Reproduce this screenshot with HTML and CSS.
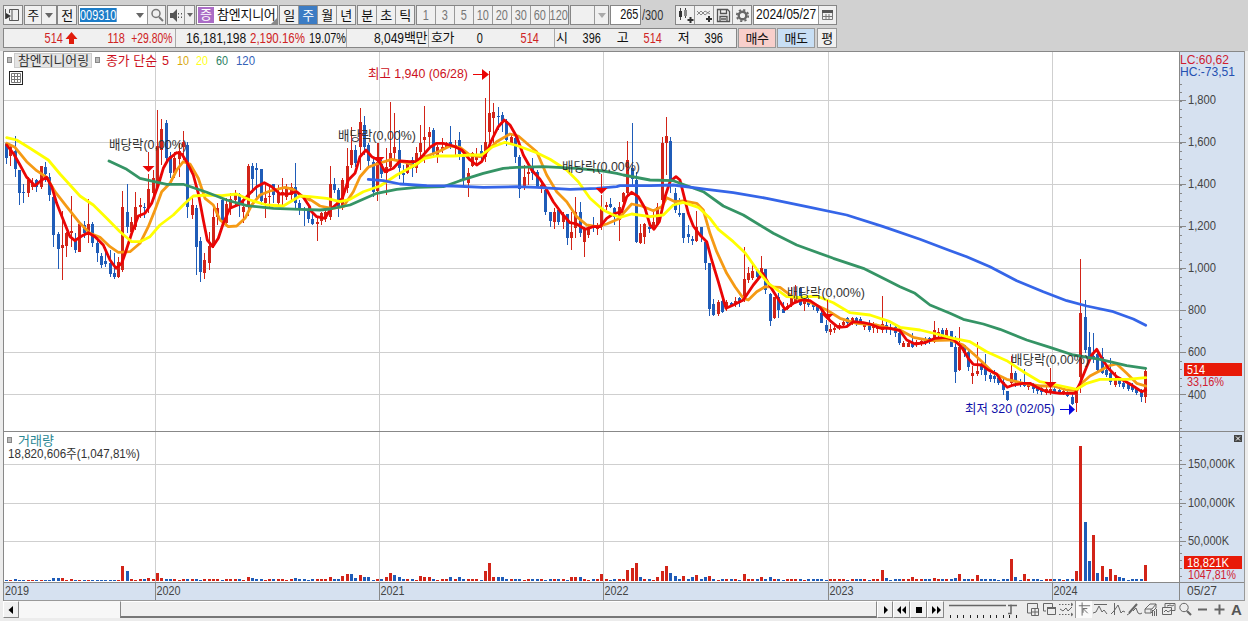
FILE: index.html
```html
<!DOCTYPE html>
<html lang="ko">
<head>
<meta charset="utf-8">
<title>참엔지니어링 차트</title>
<link rel="stylesheet" href="styles.css">
</head>
<body>
<div class="window">
  <div class="toolbar">
    <div class="group g-panel"><svg width="17" height="17" viewBox="0 0 17 17"><path d="M5.5 3.5h9v11h-9v-3M5.5 7V3.500M8 14V4M1.500 3v10" fill="none" stroke="#555"/><path d="M2 7l5 3-5 3z" fill="#333"/></svg></div>
    <div class="group g-cycle"><span class="cell w16">주</span><span class="cell grow"><i class="caret"></i></span></div>
    <div class="group g-prev"><span class="cell grow">전</span></div>
    <div class="group g-code"><span class="field"><span class="num sel">009310</span></span><span class="cell w15"><i class="caret"></i></span><span class="cell grow"><svg width="16" height="16" viewBox="0 0 16 16"><circle cx="7" cy="6.500" r="4" fill="none" stroke="#777" stroke-width="1.500"/><path d="M10 10l4 4" stroke="#777" stroke-width="2"/></svg></span></div>
    <div class="group g-sound"><span class="cell w16"><svg width="15" height="15" viewBox="0 0 15 15"><path d="M1 5h3l4-4v13l-4-4H1z" fill="#555"/><path d="M9.500 5v7M12.500 5v7" stroke="#555" stroke-dasharray="1.500 2"/></svg></span><span class="cell grow"><i class="caret small"></i></span></div>
    <div class="group g-name"><span class="badge">증</span><span class="name">참엔지니어</span><svg class="grip" width="6" height="6" viewBox="0 0 6 6"><path d="M6 0v6H0z" fill="#888"/></svg></div>
    <div class="group g-period"><span class="cell grow">일</span><span class="cell grow on">주</span><span class="cell grow">월</span><span class="cell grow">년</span></div>
    <div class="group g-min"><span class="cell grow">분</span><span class="cell grow">초</span><span class="cell grow">틱</span></div>
    <div class="group g-ticks"><span class="cell grow"><b class="num">1</b></span><span class="cell grow"><b class="num">3</b></span><span class="cell grow"><b class="num">5</b></span><span class="cell grow"><b class="num">10</b></span><span class="cell grow"><b class="num">20</b></span><span class="cell grow"><b class="num">30</b></span><span class="cell grow"><b class="num">60</b></span><span class="cell grow"><b class="num">120</b></span></div>
    <div class="group g-combo"><span class="cell grow"></span><span class="cell w13"><i class="caret pale"></i></span></div>
    <div class="group g-count"><b class="num right">265</b></div>
    <div class="total"><b class="num left">/300</b></div>
    <div class="group g-tools">
      <span class="cell grow"><svg width="17" height="17" viewBox="0 0 17 17"><path d="M3.500 1v12M8.500 1v10" stroke="#444"/><path d="M2 4h3v6H2z" fill="#333"/><path d="M7 3h3v6H7z" fill="#888"/><path d="M13.500 10v6M10.500 13h6" stroke="#333" stroke-width="2"/></svg></span>
      <span class="cell grow"><svg width="17" height="17" viewBox="0 0 17 17"><path d="M1 8l4-4 4 4 5-4M1 4l4 4 4-4 5 3" fill="none" stroke="#888"/><path d="M13 9v6M10 12h6" stroke="#333" stroke-width="2"/></svg></span>
      <span class="cell grow"><svg width="17" height="17" viewBox="0 0 17 17"><path d="M2.500 2.500h10l2 2v10h-12zM5.500 2.500v4h6v-4M5 14.500v-5h7v5M6 12h5" fill="none" stroke="#555" stroke-width="1.300"/></svg></span>
      <span class="cell grow"><svg width="17" height="17" viewBox="0 0 17 17"><circle cx="8.500" cy="8.500" r="3.800" fill="none" stroke="#666" stroke-width="2.400"/><circle cx="8.500" cy="8.500" r="5.700" fill="none" stroke="#666" stroke-width="1.800" stroke-dasharray="2.200 2.280"/></svg></span>
    </div>
    <div class="group g-date"><span class="datefield"><b class="num left broad">2024/05/27</b></span><span class="cell grow"><svg width="13" height="13" viewBox="0 0 13 13"><path d="M1.500 2.500h10v8h-10zM5 5v5M8 5v5M2 7.500h9" fill="none" stroke="#777"/><path d="M1 1h11v3H1z" fill="#555"/></svg></span></div>
  </div>

  <div class="quote">
    <div class="quotebox">
      <div class="q q1"><b class="num red">514</b><svg width="13" height="14" viewBox="0 0 13 14"><path d="M6.500 1l6 7H9v5H4V8H.5z" fill="#e01c0c"/></svg><b class="num red">118</b><b class="num red pct">+29.80%</b></div>
      <div class="q q2"><b class="num left broad v1">16,181,198</b><b class="num left broad red v2">2,190.16%</b><b class="num left">19.07%</b></div>
      <div class="q q3"><b class="num right broad">8,049</b><span>백만</span></div>
      <div class="q q4"><span>호가</span><b class="num zero">0</b><b class="num red">514</b></div>
      <div class="q q5"><span>시</span><b class="num">396</b><span>고</span><b class="num red">514</b><span>저</span><b class="num">396</b></div>
    </div>
    <button class="btn buy">매수</button><button class="btn sell">매도</button><button class="btn avg">평</button>
  </div>

  <svg class="chart" id="chart" width="1242" height="550" viewBox="3 51 1242 550"></svg>

  <div class="footer">
    <div class="arrowbtn first"><svg width="14" height="14" viewBox="0 0 14 14"><path d="M9 3v8L4.500 7z"/></svg></div>
    <div class="trough"></div>
    <div class="thumb"></div>
    <div class="arrowbtn"><svg width="14" height="14" viewBox="0 0 14 14"><path d="M6 3v8l4-4z"/></svg></div>
    <div class="arrowbtn wide"><svg width="14" height="14" viewBox="0 0 14 14"><path d="M6 3v8L2 7zM11 3v8L7 7z"/></svg></div>
    <div class="arrowbtn wide"><svg width="14" height="14" viewBox="0 0 14 14"><path d="M4 4h6v6H4z"/></svg></div>
    <div class="arrowbtn wide"><svg width="14" height="14" viewBox="0 0 14 14"><path d="M3 3v8l4-4zM8 3v8l4-4z"/></svg></div>
    <svg class="slider" width="76" height="17" viewBox="0 0 76 17"><path d="M5 4.500h57M64 12.500h3V3.500M64 4.500h9" fill="none" stroke="#666" stroke-width="1.500"/><path d="M6.500 14v3M13.500 14v3M19.500 14v3M26.500 14v3M33.500 14v3M39.500 14v3M46.500 14v3M52.500 14v3M59.500 14v3M65.500 14v3M72.500 14v3" stroke="#222"/></svg>
    <div class="icons">
      <svg viewBox="0 0 17 17"><path d="M7 12H3.500V2.500h10V7M7.500 7.500h7v7h-7zM11 7.500v7M7.500 11h7" /></svg>
      <svg viewBox="0 0 17 17"><path d="M5 10H2.500V2.500h9V6M6.500 6.500h8v7h-8z"/><path d="M6 6h9v2H6z" class="solid"/></svg>
      <svg viewBox="0 0 17 17"><path d="M1 3.500h13M1 13.500h13" stroke-dasharray="1.500 1.500"/><path d="M2 8l3 2 3-3 2 3 4-4M13 2l2 1.500-2 1.500M13 12l2 1.500-2 1.500"/></svg>
      <svg viewBox="0 0 17 17" class="pressed"><path d="M3 4.500h12M6.500 1v14M7.500 7.500l5 5M7.500 12V7.500H12" /></svg>
      <svg viewBox="0 0 17 17"><path d="M2 3.500h13M1 12l3-1 3-6 3 6 2-2 3 4"/></svg>
      <svg viewBox="0 0 17 17"><path d="M5.500 2v12M2 13l3-3 4-6 3 8 2-2 2 1"/></svg>
      <svg viewBox="0 0 17 17"><path d="M1 14l3-2M7 10l3-3 2 5 2 1 2-1"/><path d="M3 12l8-9" stroke-width="2"/></svg>
      <svg viewBox="0 0 17 17"><path d="M2 8l5-5h6l-4 5zM2 8v4h6V8M8 12l5-5V3M9.500 9v6M11.500 10v5M13.500 8v7"/></svg>
      <svg viewBox="0 0 17 17"><path d="M5 6V2.500h10v7h-3M2.500 6.500h9v7h-9zM4 11l2-2 2 2 3-2M7 5l3-1 2 1 2-1"/></svg>
      <svg viewBox="0 0 17 17"><circle cx="7" cy="6.500" r="4.200"/><path d="M10 10l4 4" stroke-width="2.200"/></svg>
      <svg viewBox="0 0 17 17"><path d="M4 8.500h9" stroke-width="2"/></svg>
      <svg viewBox="0 0 17 17"><path d="M3.500 8.500h10M8.500 3.500v10" stroke-width="2"/></svg>
      <span class="bigA">A</span>
    </div>
  </div>
</div>
<script src="chart.js"></script>
</body>
</html>
```

FILE: styles.css
```css
* { box-sizing: border-box; }
body {
  margin: 0;
  width: 1248px;
  height: 621px;
  overflow: hidden;
  background: #ececec;
  color: #111;
  font: 13px/17px "Liberation Sans", "Noto Sans CJK KR", sans-serif;
}
b { font-weight: 400; }
.window { display: flex; flex-direction: column; height: 621px; }

.toolbar {
  display: flex;
  height: 27px;
  padding: 5px 0 0 3px;
  background: #d1d1d1;
}
.group {
  display: flex;
  height: 20px;
  flex: none;
  border: 1px solid #868686;
  background: #f0f0f0;
  overflow: hidden;
}
.cell { display: flex; align-items: center; justify-content: center; border-left: 1px solid #999; letter-spacing: -0.5px; flex: none; }
.cell:first-child { border-left: 0; }
.grow { flex: 1 1 0; min-width: 0; }
.w13 { width: 14px; }
.w15 { width: 15px; }
.w16 { width: 16px; }
.num { display: inline-block; flex: none; font-size: 14px; letter-spacing: 0; transform: scaleX(0.78); white-space: nowrap; }
.num.broad { transform: scaleX(0.86); }
.num.left { transform-origin: left; }
.num.right { transform-origin: right; }
.caret { border: 4px solid transparent; border-top: 5px solid #666; border-bottom: 0; }
.caret.small { border-width: 4px 3px 0; }
.caret.pale { border-top-color: #aaa; }

.g-panel { width: 20px; margin-right: 1px; }
.g-cycle { width: 33px; }
.g-prev { width: 20px; margin-right: 1px; }
.g-code { width: 88px; margin-right: 1px; }
.field { width: 53px; background: #fff; display: flex; align-items: center; }
.sel { background: #1c7cc8; color: #fff; line-height: 14px; transform-origin: left; margin-left: 1px; }
.g-code .w15 { border-left: 0; background: #fff; }
.g-sound { width: 28px; margin-right: 1px; }
.g-name { width: 82px; margin-right: 1px; background: #fff; }
.badge { width: 16px; margin: 1px; background: #ab6cc6; color: #fff; text-align: center; line-height: 16px; flex: none; }
.name { margin-left: 2px; width: 58px; flex: none; white-space: nowrap; letter-spacing: -0.25px; line-height: 18px; }
.grip { flex: none; align-self: flex-end; margin-left: -4px; }
.g-period { width: 77px; margin-right: 1px; }
.g-period .on { background: #3c7cc4; color: #fff; }
.g-min { width: 58px; margin-right: 1px; }
.g-ticks { width: 153px; margin-right: 1px; color: #777; }
.g-combo { width: 39px; margin-right: 1px; }
.g-count { width: 31px; background: #fff; justify-content: flex-end; padding-right: 2px; }
.total { width: 34px; line-height: 20px; padding-left: 1px; color: #333; }
.g-tools { width: 77px; margin-right: 1px; }
.g-date { width: 84px; }
.datefield { width: 64px; flex: none; background: #fff; padding-left: 2px; }

.quote { display: flex; height: 24px; padding: 1px 0 0 3px; background: #d1d1d1; gap: 1px; }
.quotebox { display: flex; width: 734px; height: 20px; border: 1px solid #868686; background: #f0f0f0; line-height: 18px; }
.q { display: flex; align-items: center; border-left: 1px solid #aaa; flex: none; letter-spacing: -0.5px; overflow: hidden; white-space: nowrap; }
.q:first-child { border-left: 0; }
.red { color: #cf2323; }
.q1 { width: 171px; padding-left: 38px; }
.q1 svg { flex: none; }
.q1 .num:nth-of-type(2) { margin-left: 27px; }
.q1 .pct { margin-left: -4px; transform: scaleX(0.74); }
.q2 { width: 171px; padding-left: 10px; }
.q2 .v1 { width: 64px; }
.q2 .v2 { width: 59px; }
.q3 { width: 82px; justify-content: flex-end; padding-right: 1px; }
.q4 { width: 126px; padding-left: 2px; }
.q4 .zero { margin-left: 22px; }
.q4 .num + .num { margin-left: 34px; }
.q5 { width: 182px; padding-left: 1px; }
.q5 .num { margin-left: 13px; margin-right: 13px; }
.q .v2.broad { transform: scaleX(0.82); }
.btn { width: 38px; height: 20px; padding: 0; border: 1px solid #999; font: inherit; line-height: 17px; letter-spacing: -0.5px; color: #111; }
.buy { background: #f8cfcb; }
.sell { background: #c8dff5; }
.avg { width: 20px; background: #f0f0f0; margin-left: 1px; }

.chart { display: block; flex: none; margin-left: 3px; }
.chart text { font-family: "Liberation Sans", "Noto Sans CJK KR", sans-serif; font-size: 13px; fill: #333; }

.footer { display: flex; height: 17px; padding-left: 3px; align-items: stretch; background: #ececec; }
.arrowbtn { width: 16px; display: flex; align-items: center; justify-content: center; border: 1px solid #888; border-top-color: #fff; border-left-color: #fff; background: #f0f0f0; }
.arrowbtn.wide { width: 17px; }
.arrowbtn svg { flex: none; }
.trough { width: 101px; background: #f7f7f7; }
.thumb { width: 757px; background: #f0f0f0; border: 1px solid #888; border-top-color: #fff; border-bottom: 2px solid #777; border-left-color: #888; }
.slider { flex: none; }
.icons { display: flex; margin-left: 4px; }
.icons svg { width: 17px; height: 17px; fill: none; stroke: #666; }
.icons .solid { fill: #666; stroke: none; }
.icons .pressed { background: #fafafa; border-left: 1px solid #999; }
.bigA { width: 17px; text-align: center; font-weight: 700; font-size: 15px; color: #555; }
```

FILE: chart.js
```js
(function () {
  const svg = document.getElementById('chart');
  const RED = '#d22418', BLUE = '#1f5cb8';
  const out = [];
  const rect = (x, y, w, h, f, s) => out.push(`<rect x="${x}" y="${y}" width="${w}" height="${h}" fill="${f}"${s ? ` stroke="${s}"` : ''}/>`);
  const line = (x1, y1, x2, y2, s) => out.push(`<path d="M${x1} ${y1}L${x2} ${y2}" stroke="${s}" fill="none"/>`);
  const text = (x, y, w, t, f) => out.push(`<text x="${x}" y="${y}" textLength="${w}" lengthAdjust="spacingAndGlyphs" style="fill:${f}">${t}</text>`);
  const num = (x, y, w, t, f) => out.push(`<text x="${x}" y="${y}" textLength="${w}" lengthAdjust="spacingAndGlyphs" style="font-size:13.5px;fill:${f || '#444'}">${t}</text>`);

  // panes
  rect(3, 51, 1242, 550, '#fff');
  rect(1180, 52, 64, 548, '#d6e1f0');
  rect(4, 583, 1240, 17, '#d6e1f0');
  for (let i = 0; i < 8; i++) line(4, 100.5 + 42 * i, 1179, 100.5 + 42 * i, '#cfcfcf');
  [464.5, 503.5, 541.5].forEach(y => line(4, y, 1179, y, '#cfcfcf'));
  const years = [[155.5, 2020], [379.5, 2021], [603.5, 2022], [828.5, 2023], [1052.5, 2024]];
  years.forEach(([x]) => line(x, 52, x, 583, '#cfcfcf'));

  // candles: high, top, bottom, low in thirds of a pixel below the block's base line
  const blocks = [
    [90, `157 160 203 222 b|165 172 198 228 r|138 182 238 262 b|240 240 308 345 b|282 305 308 338 b|262 270 308 320 r|265 280 290 300 r|268 270 290 305 b|228 228 292 298 r|215 230 252 275 b|248 262 315 332 b|310 320 435 472 b|425 432 476 538 b|362 465 474 570 r|425 430 468 500 r|318 422 428 470 r|430 450 480 490 b|395 402 486 486 r|392 405 428 445 b|328 402 435 460 r|395 402 458 470 b|440 460 488 515 b|490 497 524 535 b|470 512 522 530 b|480 520 552 562 b|490 548 560 568 b|500 515 560 563 r|302 350 540 545 r|282 366 412 430 b|382 395 425 430 r|305 352 410 420 r|325 345 352 385 r|338 350 354 385 b|252 298 355 368 r|240 264 308 322 r|60 168 292 300 r|88 118 180 225 r|90 100 203 215 b|185 198 248 265 b|185 205 248 265 r|158 182 208 262 r|122 155 172 210 r|155 165 352 385 b|325 345 375 388 r|345 355 470 555 b|440 452 545 575 b|490 510 548 568 r|425 468 520 540 r|350 380 468 475 r|340 355 380 405 r|328 330 390 410 b|325 342 400 410 r|310 328 350 375 r|300 310 330 345 r|310 312 345 380 b|322 350 365 398 r|222 228 352 378 r|220 228 268 310 b|220 235 240 330 b|238 238 332 345 b|282 325 340 385 r|290 318 320 358 r|282 282 315 340 b|285 310 338 348 r|265 305 315 345 r|282 292 320 330 r|278 292 315 330 r|220 290 338 355 b|330 340 358 375 b|350 358 360 408 b|345 360 388 398 b|365 388 402 405 b|385 396 402 452 r`],
    [60, `455 460 482 495 r|450 455 478 485 r|318 372 470 480 r|355 372 390 400 b|385 390 438 470 b|355 360 440 450 r|265 318 385 400 r|200 270 315 325 r|255 270 310 320 b|145 185 262 330 r|168 195 262 285 b|250 255 302 320 b|295 305 395 412 b|250 305 392 422 r|300 312 342 355 b|265 320 340 405 r|125 278 320 330 r|160 260 280 300 r|210 270 325 358 b|315 338 345 370 b|300 308 340 342 r|290 300 325 350 b|260 280 325 340 r|195 248 275 290 r|138 230 240 310 r|200 215 230 258 r|205 210 282 290 b|255 262 285 310 r|235 260 268 280 r|245 250 262 268 r|198 245 258 268 b|240 255 262 290 r|215 240 282 300 b|285 290 360 378 b|325 340 370 412 r|275 280 318 320 r|265 290 300 318 r|255 272 282 300 b|115 245 290 305 r|32 160 215 250 r|130 155 175 250 r|140 167 170 210 b|155 165 182 215 b|178 182 240 258 b|218 232 250 255 r|228 235 292 310 b|285 290 388 415 b|315 350 378 390 r|318 335 342 375 r|295 325 340 360 b|330 335 380 385 b|360 375 385 398 r|385 390 455 465 b|455 455 482 502 b|445 455 485 508 r|448 450 485 495 b|455 465 485 508 r|462 462 535 555 b|455 515 535 570 r|412 455 505 535 r|425 455 518 530 b|500 505 545 590 r|495 505 525 535 r|470 498 502 515 b|490 495 508 525 r|405 445 500 510 r|425 435 440 450 r|415 432 440 445 b|440 445 470 495 b|425 440 480 542 r|395 400 425 435 r|243 300 400 410 r`],
    [100, `68 205 238 255 b|215 240 425 428 b|372 398 428 433 r|370 372 412 432 r|372 382 386 400 b|330 365 382 390 r|310 320 375 378 r|110 130 300 312 r|50 108 130 225 r|110 122 245 278 b|265 280 330 340 b|295 340 345 350 b|340 340 415 430 b|375 402 412 430 b|408 418 422 435 b|332 380 422 425 r|380 382 410 425 b|420 425 490 510 b|490 490 628 648 b|598 612 645 648 b|600 605 642 648 r|598 602 635 640 b|600 605 625 632 r|605 610 615 620 b|590 602 612 622 r|590 595 608 620 b|440 538 600 605 r|500 520 540 550 r|485 512 535 540 r|512 514 530 540 b|468 503 525 530 r|508 508 570 582 b|578 582 662 678 b|590 592 655 658 r|580 590 630 655 b|605 628 638 640 b|608 618 628 630 r|560 588 612 620 r|555 590 605 610 r|560 565 615 618 b|590 598 612 632 r|590 600 615 620 b|605 612 622 630 b|612 618 632 640 b|630 640 668 670 b|660 675 692 698 b|672 686 696 705 r|675 684 690 700 r|670 675 682 690 r|658 665 675 680 r|650 655 668 680 b|650 655 668 675 r|650 655 670 678 b|650 658 672 675 b|665 670 680 690 r|660 670 690 695 b|665 675 685 700 r|672 678 688 700 r|588 672 690 700 r|660 674 684 700 b|672 680 690 705 b|675 682 700 712 b|680 700 730 735 b`],
    [250, `272 280 290 292 r|272 280 290 292 r|248 275 290 293 b|270 275 285 290 r|268 272 282 288 r|262 268 280 285 b|262 265 275 282 b|212 240 275 280 r|235 245 255 265 r|235 240 262 270 b|235 240 260 270 r|242 242 290 292 b|258 290 365 400 b|230 290 360 362 r|285 285 310 320 b|300 305 350 362 b|348 370 378 402 r|275 362 372 378 r|340 345 360 375 b|312 348 375 392 b|370 375 388 395 b|360 378 388 400 b|375 385 400 405 b|388 395 420 435 b|422 424 450 452 b|318 370 400 410 r|362 370 392 410 b|388 395 405 410 b|358 395 408 412 b|395 400 410 420 r|400 405 418 428 b|408 412 422 432 b|408 415 425 435 b|412 418 430 434 r|405 416 430 436 r|412 418 428 432 b|415 420 430 432 b|418 424 432 434 r|420 428 438 440 b|430 440 462 465 b|412 415 460 485 r|28 188 380 430 r|150 200 300 310 b|245 290 318 325 b|248 318 322 340 b|300 312 360 370 b|295 320 370 372 b|350 360 375 380 b|325 370 395 405 b|365 385 405 412 r|380 388 402 410 b|385 398 412 418 b|395 402 418 422 b|400 408 420 426 b|412 418 430 434 b|418 420 442 455 b|358 362 442 458 r`]
  ];
  const starts = [0, 73, 145, 208];
  const X = i => Math.round(6 + 4.314 * i);
  const tone = [];
  blocks.forEach(([base, list], k) => list.split('|').forEach((row, j) => {
    const i = starts[k] + j;
    if (k < 3 && i >= starts[k + 1]) return;
    const p = row.split(' ');
    const [h, t, b, l] = p.slice(0, 4).map(v => Math.round(base + v / 3));
    const c = p[4] === 'r' ? RED : BLUE;
    tone[i] = c;
    rect(X(i), h, 1, Math.max(1, l - h), c);
    rect(X(i) - 1, t, 3, Math.max(1, b - t), c);
  }));

  // volume
  const vol = { 2: 2, 11: 3, 12: 3, 13: 3, 15: 2, 27: 15, 28: 10, 33: 3, 35: 8, 36: 3, 56: 4, 57: 3, 67: 3, 75: 4, 78: 5, 79: 7, 80: 7, 81: 3, 82: 6, 83: 4, 84: 4, 88: 4, 89: 8, 90: 6, 91: 4, 96: 5, 97: 4, 98: 4, 103: 4, 105: 4, 111: 10, 112: 18, 113: 4, 114: 4, 115: 4, 131: 4, 132: 4, 133: 4, 138: 7, 144: 11, 145: 13, 146: 18, 147: 4, 151: 4, 152: 10, 153: 15, 154: 8, 155: 5, 157: 5, 159: 4, 160: 6, 162: 4, 163: 5, 171: 7, 175: 4, 177: 4, 203: 11, 204: 3, 210: 4, 215: 3, 220: 3, 221: 7, 225: 6, 233: 22, 234: 4, 236: 7, 248: 10, 249: 135, 250: 59, 251: 20, 252: 46, 253: 8, 254: 15, 255: 4, 256: 12, 257: 6, 258: 4, 259: 3, 264: 16 };
  const redVol = [75, 78, 79, 96, 131, 138, 145, 146, 157, 163, 210, 225, 236, 252, 254, 256];
  const blueVol = [147, 80, 90, 154];
  for (let i = 0; i < 265; i++) {
    const h = vol[i] || (i < 27 || (i * 7) % 5 === 0 ? 1 : 2);
    rect(X(i) - 1, 581 - h, 3, h, redVol.includes(i) ? RED : blueVol.includes(i) ? BLUE : tone[i]);
  }

  // moving averages, one string for each block: x,y in thirds of a pixel
  const origins = [[0, 90], [310, 60], [600, 100], [900, 250]];
  const ma = [
    ['#3565e8', '', '175,358 220,362 270,372 350,377 430,378 520,382 620,380 680,382 780,388 860,385 920,380', '60,257 150,257 220,255 320,268 400,278 500,295 620,320 740,345 850,380 960,418', '145,0 200,20 270,50 350,92 430,125 500,152 560,168 640,185 700,207 737,226'],
    ['#359465', '327,213 380,238 420,265 500,283 550,283 620,307 680,330 740,347 820,355 900,358 960,360', '60,447 120,435 200,400 260,388 320,382 400,380 450,362 520,340 580,325 620,322 700,320 800,325 880,333 920,340', '70,225 150,240 220,242 310,275 370,318 430,345 520,400 590,435 700,475 790,505 860,540 900,560', '0,110 45,130 90,165 150,190 190,208 250,222 300,238 380,270 450,292 520,315 600,328 680,347 737,355'],
    ['#f59a14', '20,160 45,172 80,215 110,242 140,262 165,305 200,350 240,400 270,430 300,442 330,470 355,487 390,485 420,460 445,410 465,360 485,305 510,280 530,240 550,215 570,222 595,265 615,325 640,345 660,390 685,410 710,408 735,385 755,345 780,315 810,303 855,292 880,298 905,318 929,330', '0,418 30,438 65,445 100,440 130,395 150,350 175,322 200,312 245,298 290,308 315,318 345,290 385,275 420,258 450,262 480,285 510,290 530,275 560,245 600,222 625,228 650,250 680,275 710,345 740,395 770,425 800,470 830,495 860,500 890,492 930,475', '65,345 95,312 125,318 160,332 185,320 200,293 225,305 250,303 290,310 310,330 330,400 350,455 380,520 405,560 430,595 445,600 470,575 495,560 540,562 580,592 620,602 680,630 720,655 770,670 830,675 870,685', '0,240 40,262 90,272 150,270 190,285 230,320 280,368 320,388 370,400 420,408 460,408 500,420 530,422 545,400 570,378 600,362 625,348 650,342 680,370 710,400 737,408'],
    ['#ffff00', '20,143 50,150 90,175 145,210 180,252 240,318 280,345 320,385 360,425 395,455 420,455 450,440 480,405 520,375 555,340 580,318 620,315 665,317 710,312 750,330 800,345 850,348 900,318 930,320', '0,408 50,415 90,425 120,418 160,395 210,378 260,345 310,318 345,295 380,288 430,288 480,285 515,285 545,262 585,247 625,258 680,278 720,298 770,330 805,365 840,415 880,450 910,465', '60,352 95,342 150,350 190,345 220,315 250,307 295,322 330,355 355,388 400,425 435,458 470,508 505,550 560,590 600,592 650,588 700,608 750,638 810,645 870,665', '0,232 60,240 110,252 160,265 210,275 260,305 320,332 370,365 420,395 470,405 530,418 560,400 600,388 680,388 737,383'],
    ['#ea0505', '20,165 40,190 60,225 80,262 105,287 125,270 140,262 155,290 170,340 190,390 210,440 225,452 245,438 265,428 285,440 310,465 330,510 348,535 365,520 375,492 395,430 415,378 435,370 455,340 475,285 490,235 505,208 530,188 545,192 560,215 580,255 595,310 610,390 622,450 638,470 655,445 670,400 690,355 720,342 745,315 770,290 793,278 815,290 840,312 865,312 890,305 910,322 929,350', '0,450 20,470 45,475 60,450 80,432 97,415 115,360 135,340 150,290 168,270 185,290 205,300 225,335 250,325 270,303 300,305 320,305 340,285 360,262 380,250 400,250 430,258 455,270 480,300 500,315 515,305 530,275 545,240 565,200 583,180 600,195 620,230 640,285 665,330 690,358 705,380 730,425 755,460 780,488 800,492 825,508 850,500 870,500 890,475 910,462 935,455', '50,335 65,320 80,290 95,277 115,290 135,325 150,375 162,388 178,365 195,290 210,245 228,230 240,240 250,280 265,340 280,378 300,405 320,425 335,480 355,545 378,625 400,615 430,600 460,555 488,520 505,550 530,590 555,628 580,610 605,600 630,602 660,622 690,662 715,682 740,680 760,665 790,668 810,672 840,684 870,685', '0,242 20,270 45,282 75,278 105,265 135,262 160,268 185,292 205,325 220,343 245,345 265,360 290,372 305,395 322,412 340,405 370,400 390,400 410,412 440,425 480,430 525,430 540,400 560,350 575,315 590,298 605,325 625,355 650,380 690,402 725,425 737,420']
  ];
  [ma[2], ma[4], ma[3], ma[1], ma[0]].forEach(m => {
    const pts = [];
    let last = 0;
    m.slice(1).forEach((s, k) => s && s.split(' ').forEach(p => {
      const [x, y] = p.split(',');
      const px = origins[k][0] + x / 3;
      if (px <= last) return;
      last = px;
      pts.push(px.toFixed(1) + ',' + (origins[k][1] + y / 3).toFixed(1));
    }));
    out.push(`<polyline points="${pts.join(' ')}" fill="none" stroke="${m[0]}" stroke-width="2.8" stroke-linejoin="round" stroke-linecap="round"/>`);
  });

  // ex-dividend marks
  [[109, 149, 148.5, 172], [338, 140, 378.5, 163], [562, 171, 601.5, 194], [787, 297, 827.5, 320], [1011, 364, 1050.5, 388]].forEach(([tx, ty, ax, ay]) => {
    text(tx, ty, 78, '배당락(0,00%)', '#333');
    line(ax, ay - 20, ax, ay - 5, '#d22418');
    out.push(`<path d="M${ax - 6} ${ay - 6}h12l-6 6z" fill="#ea0505"/>`);
  });
  text(368, 78, 100, '최고 1,940 (06/28)', '#cc1020');
  out.push('<path d="M473 74.500h10" stroke="#ea0505"/><path d="M482 69l7 5.500-7 5.500z" fill="#ea0505"/>');
  text(965, 413, 90, '최저 320 (02/05)', '#1010a8');
  out.push('<path d="M1060 409.500h10" stroke="#0808e0"/><path d="M1069 404l6 5.500-6 5.500z" fill="#0808e0"/>');

  // legends
  rect(7.5, 57.5, 4, 5, '#bbb', '#888');
  rect(14.5, 53.5, 77, 14, '#e4e4e4', '#ccc');
  text(18, 65, 71, '참엔지니어링', '#333');
  rect(95.5, 57.5, 4, 5, '#bbb', '#888');
  text(106, 65, 51, '종가 단순', '#cc1020');
  num(162, 65, 7, '5', '#cc1020');
  num(177, 65, 12, '10', '#d8a810');
  num(196, 65, 12, '20', '#ffff20');
  num(216, 65, 12, '60', '#2c8062');
  num(236, 65, 19, '120', '#3562b8');
  rect(9.5, 71.5, 13, 13, '#fff', '#222');
  out.push('<path d="M11.500 73.500h9v9h-9zM14.500 73v10M17.500 73v10M11 76.500h10M11 79.500h10" fill="none" stroke="#777"/>');
  rect(7.5, 437.5, 4, 5, '#bbb', '#888');
  text(18, 445, 36, '거래량', '#2a8794');
  text(8, 458, 132, '18,820,606주(1,047,81%)', '#333');

  // axes
  line(1179.5, 52, 1179.5, 600, '#888');
  line(3, 431.5, 1244, 431.5, '#888');
  line(3, 582.5, 1244, 582.5, '#888');
  line(3, 600.5, 1244, 600.5, '#999');
  line(3, 51.5, 1245, 51.5, '#888');
  line(3.5, 51, 3.5, 601, '#888');
  line(1244.5, 51, 1244.5, 601, '#999');
  for (let y = 83.7; y < 430; y += 8.4) line(1180, Math.round(y) + .5, 1182, Math.round(y) + .5, '#888');
  for (let y = 437; y < 582; y += 7.7) line(1180, Math.round(y) + .5, 1182, Math.round(y) + .5, '#888');
  ['1,800', '1,600', '1,400', '1,200', '1,000', '800', '600', '400'].forEach((t, i) => {
    line(1180, 100.5 + 42 * i, 1186, 100.5 + 42 * i, '#888');
    num(1188, 104 + 42 * i + (i === 7 ? 1 : 0), t.length > 3 ? 28 : 18, t);
  });
  [[464.5, '150,000K'], [503.5, '100,000K'], [541.5, '50,000K']].forEach(([y, t]) => {
    line(1180, y, 1186, y, '#888');
    num(1188, y + 3.5, t.length === 8 ? 47 : 41, t);
  });
  num(1180, 63.5, 49, 'LC:60,62', '#d02030');
  num(1180, 76, 55, 'HC:-73,51', '#2450b0');
  rect(1184, 363, 58, 13, '#e81a08');
  num(1187, 374, 18, '514', '#fff');
  num(1187, 386, 37, '33,16%', '#d02030');
  rect(1184, 556, 58, 13, '#e81a08');
  num(1187, 567, 42, '18,821K', '#fff');
  num(1188, 579, 48, '1047,81%', '#d02030');
  rect(1234, 435, 8, 7, '#444');
  out.push('<path d="M1236 436.500l4 4M1240 436.500l-4 4" stroke="#fff"/>');
  num(5, 595, 24, '2019');
  years.forEach(([x, t]) => { line(x, 583, x, 600, '#888'); num(x + 1, 595, 24, t); });
  num(1187, 595, 30, '05/27');
  svg.innerHTML = out.join('');
})();
```
